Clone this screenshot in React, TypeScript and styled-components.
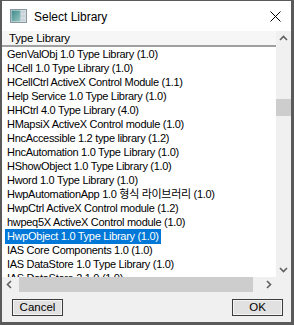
import * as React from "react";
import styled, { createGlobalStyle } from "styled-components";

const Global = createGlobalStyle`
  html, body { margin: 0; padding: 0; background: #ffffff; }
  body { font-family: "Liberation Sans", Arial, sans-serif; }
`;

const Window = styled.div`
  box-sizing: border-box;
  width: 294px;
  height: 325px;
  display: flex;
  flex-direction: column;
  background: #f0f0f0;
  border-style: solid;
  border-color: #5a5a5a;
  border-width: 1px 3px 3px 2px;
  overflow: hidden;
`;

const TitleBar = styled.div`
  height: 30px;
  flex: none;
  display: flex;
  align-items: center;
  background: #ffffff;
  padding: 0 10px 0 8px;
  gap: 7px;
`;

const Title = styled.div`
  flex: 1;
  font-size: 12px;
  color: #000;
  padding-top: 1px;
`;

const ListBox = styled.div`
  flex: none;
  height: 261px;
  display: grid;
  grid-template-columns: 1fr 15px;
  grid-template-rows: 1fr 15px;
  background: #ffffff;
`;

const ListMain = styled.div`
  overflow: hidden;
  display: flex;
  flex-direction: column;
`;

const Header = styled.div`
  height: 16px;
  flex: none;
  box-sizing: border-box;
  background: #f6f6f6;
  border-bottom: 2px solid #a0a0a0;
  font-size: 11.5px;
  line-height: 14px;
  letter-spacing: -0.2px;
  padding-left: 7px;
  color: #000;
`;

const Rows = styled.div`
  padding-left: 3px;
`;

const Row = styled.div`
  height: 14px;
  display: flex;
  align-items: flex-start;
  white-space: nowrap;
`;

const Label = styled.span<{ $selected?: boolean }>`
  font-family: "Liberation Sans", "Noto Sans CJK KR", Arial, sans-serif;
  font-size: 11px;
  letter-spacing: -0.3px;
  line-height: 15px;
  height: 15px;
  padding: 0 2px;
  color: ${(p) => (p.$selected ? "#ffffff" : "#000000")};
  background: ${(p) => (p.$selected ? "#0078d7" : "transparent")};
`;

const VScroll = styled.div`
  background: #f0f0f0;
  display: flex;
  flex-direction: column;
`;

const HScroll = styled.div`
  background: #f0f0f0;
  display: flex;
`;

const Corner = styled.div`
  background: #f0f0f0;
`;

const ArrowButton = styled.div`
  width: 15px;
  height: 15px;
  flex: none;
  display: flex;
  align-items: center;
  justify-content: center;
  color: #606060;
`;

const Track = styled.div`
  flex: 1;
  display: flex;
  flex-direction: column;
`;

const HTrack = styled.div`
  flex: 1;
  display: flex;
  padding: 0 5px 0 2px;
`;

const Thumb = styled.div`
  background: #cdcdcd;
  flex: none;
`;

const Footer = styled.div`
  flex: 1;
  display: flex;
  justify-content: space-between;
  align-items: flex-start;
  padding: 7px 8px 0 10px;
`;

const Button = styled.button`
  box-sizing: border-box;
  width: 51px;
  height: 17px;
  padding: 0;
  background: #e1e1e1;
  border: 1px solid #3c3c3c;
  box-shadow: inset 0 0 0 1px #f4f4f4;
  font-family: "Liberation Sans", Arial, sans-serif;
  font-size: 11.5px;
  line-height: 13px;
  color: #000;
`;

const items = [
  "GenValObj 1.0 Type Library (1.0)",
  "HCell 1.0 Type Library (1.0)",
  "HCellCtrl ActiveX Control Module (1.1)",
  "Help Service 1.0 Type Library (1.0)",
  "HHCtrl 4.0 Type Library (4.0)",
  "HMapsiX ActiveX Control module (1.0)",
  "HncAccessible 1.2 type library (1.2)",
  "HncAutomation 1.0 Type Library (1.0)",
  "HShowObject 1.0 Type Library (1.0)",
  "Hword 1.0 Type Library (1.0)",
  "HwpAutomationApp 1.0 형식 라이브러리 (1.0)",
  "HwpCtrl ActiveX Control module (1.2)",
  "hwpeq5X ActiveX Control module (1.0)",
  "HwpObject 1.0 Type Library (1.0)",
  "IAS Core Components 1.0 (1.0)",
  "IAS DataStore 1.0 Type Library (1.0)",
  "IAS DataStore 2.1.0 (1.0)",
];

const selectedIndex = 13;

const Chevron = ({ dir }: { dir: "up" | "down" | "left" | "right" }) => {
  const rot = { up: 0, right: 90, down: 180, left: 270 }[dir];
  return (
    <svg width="9" height="9" viewBox="0 0 9 9">
      <path
        d="M1 6 L4.5 2.5 L8 6"
        fill="none"
        stroke="currentColor"
        strokeWidth="1.6"
        transform={`rotate(${rot} 4.5 4.5)`}
      />
    </svg>
  );
};

const AppIcon = () => (
  <svg width="17" height="14" viewBox="0 0 17 14">
    <defs>
      <linearGradient id="ico" x1="0" y1="0" x2="1" y2="1">
        <stop offset="0" stopColor="#3a8a8a" />
        <stop offset="1" stopColor="#9cc6c2" />
      </linearGradient>
    </defs>
    <rect x="0.5" y="0.5" width="16" height="13" fill="#dfe6ea" stroke="#8a97a0" />
    <rect x="1.5" y="1.5" width="9" height="11" fill="url(#ico)" />
    <rect x="11" y="1.5" width="4.5" height="3" fill="#c8d2d8" />
    <rect x="11" y="5.5" width="4.5" height="3" fill="#c8d2d8" />
    <rect x="11" y="9.5" width="4.5" height="3" fill="#c8d2d8" />
  </svg>
);

const CloseIcon = () => (
  <svg width="11" height="11" viewBox="0 0 11 11">
    <path d="M0.5 0.5 L10.5 10.5 M10.5 0.5 L0.5 10.5" stroke="#000" strokeWidth="1" />
  </svg>
);

export default function App() {
  return (
    <>
      <Global />
      <Window>
        <TitleBar>
          <AppIcon />
          <Title>Select Library</Title>
          <CloseIcon />
        </TitleBar>
        <ListBox>
          <ListMain>
            <Header>Type Library</Header>
            <Rows>
              {items.map((t, i) => (
                <Row key={t}>
                  <Label $selected={i === selectedIndex}>{t}</Label>
                </Row>
              ))}
            </Rows>
          </ListMain>
          <VScroll>
            <ArrowButton>
              <Chevron dir="up" />
            </ArrowButton>
            <Track>
              <div style={{ height: 53 }} />
              <Thumb style={{ height: 17 }} />
            </Track>
            <ArrowButton>
              <Chevron dir="down" />
            </ArrowButton>
          </VScroll>
          <HScroll>
            <ArrowButton>
              <Chevron dir="left" />
            </ArrowButton>
            <HTrack>
              <Thumb style={{ width: 234 }} />
            </HTrack>
            <ArrowButton>
              <Chevron dir="right" />
            </ArrowButton>
          </HScroll>
          <Corner />
        </ListBox>
        <Footer>
          <Button>Cancel</Button>
          <Button>OK</Button>
        </Footer>
      </Window>
    </>
  );
}
